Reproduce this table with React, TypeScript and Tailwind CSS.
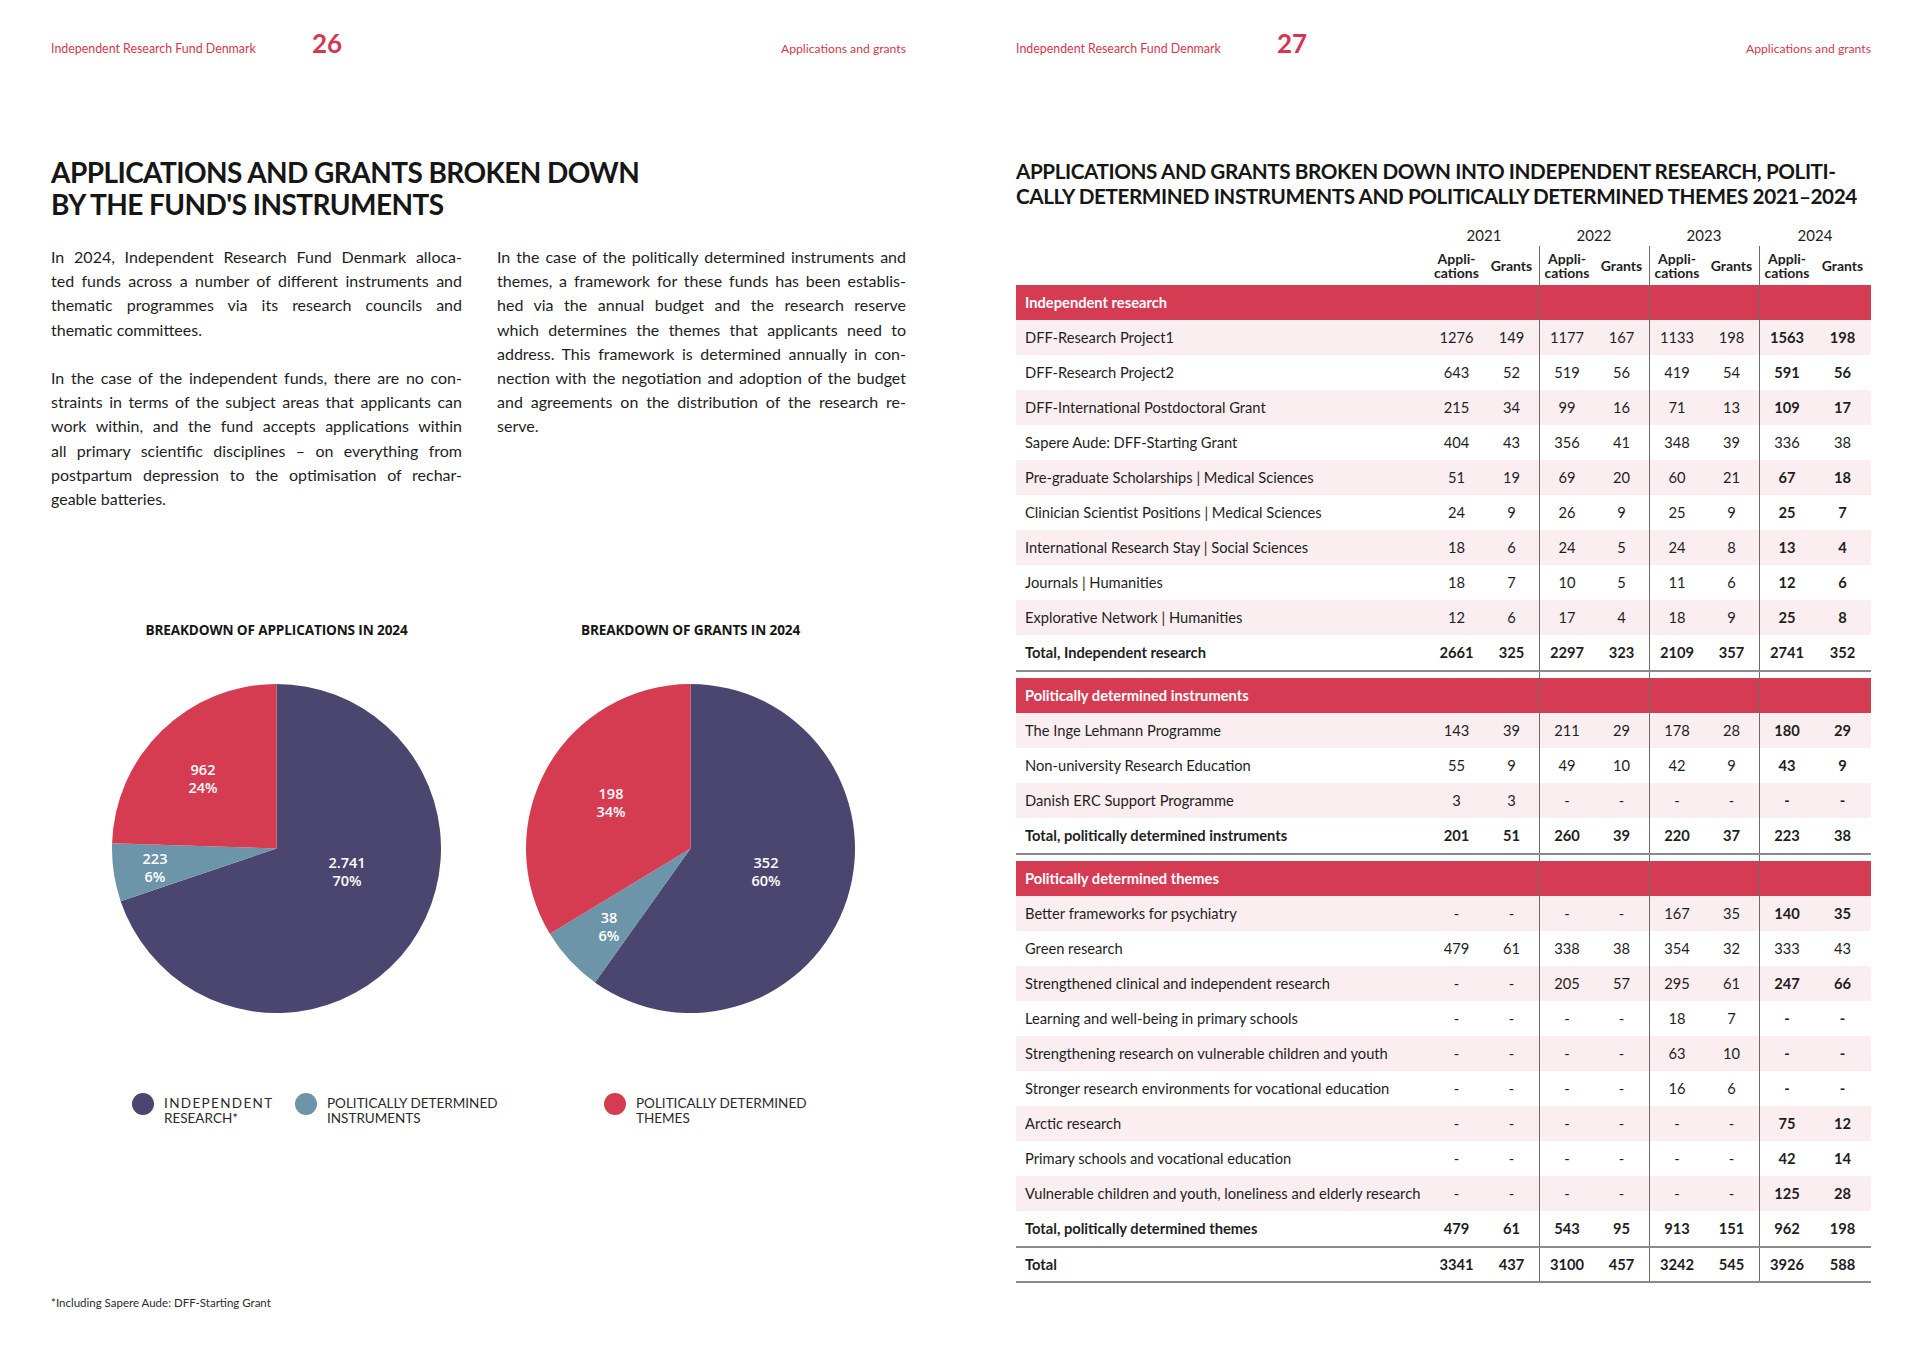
import React from "react";

type Row = { label: string; v: string[]; bold: boolean };

const sec1: Row[] = [
  { label: "DFF-Research Project1", v: ["1276", "149", "1177", "167", "1133", "198", "1563", "198"], bold: true },
  { label: "DFF-Research Project2", v: ["643", "52", "519", "56", "419", "54", "591", "56"], bold: true },
  { label: "DFF-International Postdoctoral Grant", v: ["215", "34", "99", "16", "71", "13", "109", "17"], bold: true },
  { label: "Sapere Aude: DFF-Starting Grant", v: ["404", "43", "356", "41", "348", "39", "336", "38"], bold: false },
  { label: "Pre-graduate Scholarships | Medical Sciences", v: ["51", "19", "69", "20", "60", "21", "67", "18"], bold: true },
  { label: "Clinician Scientist Positions | Medical Sciences", v: ["24", "9", "26", "9", "25", "9", "25", "7"], bold: true },
  { label: "International Research Stay | Social Sciences", v: ["18", "6", "24", "5", "24", "8", "13", "4"], bold: true },
  { label: "Journals | Humanities", v: ["18", "7", "10", "5", "11", "6", "12", "6"], bold: true },
  { label: "Explorative Network | Humanities", v: ["12", "6", "17", "4", "18", "9", "25", "8"], bold: true },
];
const tot1: Row = { label: "Total, Independent research", v: ["2661", "325", "2297", "323", "2109", "357", "2741", "352"], bold: true };

const sec2: Row[] = [
  { label: "The Inge Lehmann Programme", v: ["143", "39", "211", "29", "178", "28", "180", "29"], bold: true },
  { label: "Non-university Research Education", v: ["55", "9", "49", "10", "42", "9", "43", "9"], bold: true },
  { label: "Danish ERC Support Programme", v: ["3", "3", "-", "-", "-", "-", "-", "-"], bold: true },
];
const tot2: Row = { label: "Total, politically determined instruments", v: ["201", "51", "260", "39", "220", "37", "223", "38"], bold: true };

const sec3: Row[] = [
  { label: "Better frameworks for psychiatry", v: ["-", "-", "-", "-", "167", "35", "140", "35"], bold: true },
  { label: "Green research", v: ["479", "61", "338", "38", "354", "32", "333", "43"], bold: false },
  { label: "Strengthened clinical and independent research", v: ["-", "-", "205", "57", "295", "61", "247", "66"], bold: true },
  { label: "Learning and well-being in primary schools", v: ["-", "-", "-", "-", "18", "7", "-", "-"], bold: true },
  { label: "Strengthening research on vulnerable children and youth", v: ["-", "-", "-", "-", "63", "10", "-", "-"], bold: true },
  { label: "Stronger research environments for vocational education", v: ["-", "-", "-", "-", "16", "6", "-", "-"], bold: true },
  { label: "Arctic research", v: ["-", "-", "-", "-", "-", "-", "75", "12"], bold: true },
  { label: "Primary schools and vocational education", v: ["-", "-", "-", "-", "-", "-", "42", "14"], bold: true },
  { label: "Vulnerable children and youth, loneliness and elderly research", v: ["-", "-", "-", "-", "-", "-", "125", "28"], bold: true },
];
const tot3: Row = { label: "Total, politically determined themes", v: ["479", "61", "543", "95", "913", "151", "962", "198"], bold: true };
const grand: Row = { label: "Total", v: ["3341", "437", "3100", "457", "3242", "545", "3926", "588"], bold: true };

const GRID = "grid grid-cols-[413px_55px_55px_55px_55px_55px_55px_55px_57px]";
const LINE = "border-l border-[#6b6b6b]";

function lineCls(i: number) {
  return i === 2 || i === 4 || i === 6 ? LINE : "";
}

function DataRow({ row, pink, total, short }: { row: Row; pink: boolean; total?: boolean; short?: boolean }) {
  return (
    <div
      className={`${GRID} ${short ? "h-[33px]" : "h-[35px]"} ${
        pink ? "bg-[#fbeef0]" : "bg-white"
      } text-[14.7px] text-[#1e1e1e]`}
    >
      <div className={`flex items-center pl-[9px] whitespace-nowrap ${total ? "font-bold" : "font-normal"}`}>{row.label}</div>
      {row.v.map((x, i) => (
        <div
          key={i}
          className={`flex items-center justify-center ${lineCls(i)} ${
            total ? "font-bold" : i >= 6 && row.bold ? "font-bold" : "font-normal"
          }`}
        >
          {x}
        </div>
      ))}
    </div>
  );
}

function Band({ label }: { label: string }) {
  return (
    <div className={`${GRID} h-[35px] bg-[#d53c53] text-[14.7px] text-white font-bold`}>
      <div className="flex items-center pl-[9px] whitespace-nowrap">{label}</div>
      {[0, 1, 2, 3, 4, 5, 6, 7].map((i) => (
        <div key={i} className={lineCls(i)} />
      ))}
    </div>
  );
}

function Rule() {
  return <div className="h-[2px] bg-[#8a8a8a]" />;
}

function Gap() {
  return (
    <div className={`${GRID} h-[6px]`}>
      <div />
      {[0, 1, 2, 3, 4, 5, 6, 7].map((i) => (
        <div key={i} className={lineCls(i)} />
      ))}
    </div>
  );
}

function Section({ title, rows, total }: { title: string; rows: Row[]; total: Row }) {
  return (
    <div>
      <Band label={title} />
      {rows.map((r, i) => (
        <DataRow key={i} row={r} pink={i % 2 === 0} />
      ))}
      <DataRow row={total} pink={false} total />
      <Rule />
    </div>
  );
}

function slice(cx: number, cy: number, r: number, a0: number, a1: number) {
  const rad = (a: number) => (a * Math.PI) / 180;
  const x0 = cx + r * Math.sin(rad(a0));
  const y0 = cy - r * Math.cos(rad(a0));
  const x1 = cx + r * Math.sin(rad(a1));
  const y1 = cy - r * Math.cos(rad(a1));
  const large = a1 - a0 > 180 ? 1 : 0;
  return `M ${cx} ${cy} L ${x0} ${y0} A ${r} ${r} 0 ${large} 1 ${x1} ${y1} Z`;
}

type Lbl = { x: number; y: number; a: string; b: string };

function Pie({ parts, labels }: { parts: number[]; labels: Lbl[] }) {
  const colors = ["#4b4670", "#6d95a9", "#d53b51"];
  const sum = parts.reduce((s, p) => s + p, 0);
  let acc = 0;
  const cx = 164.5;
  const cy = 164.5;
  const r = 164.5;
  return (
    <svg width="329" height="329" viewBox="0 0 329 329" className="block">
      {parts.map((p, i) => {
        const a0 = (acc / sum) * 360;
        acc += p;
        const a1 = (acc / sum) * 360;
        return <path key={i} d={slice(cx, cy, r, a0, a1)} fill={colors[i]} />;
      })}
      {labels.map((l, i) => (
        <g key={i} fill="#ffffff" fontFamily="'Open Sans', sans-serif" fontWeight={600} fontSize="14.5" textAnchor="middle">
          <text x={l.x} y={l.y} dominantBaseline="central">
            {l.a}
          </text>
          <text x={l.x} y={l.y + 18} dominantBaseline="central">
            {l.b}
          </text>
        </g>
      ))}
    </svg>
  );
}

function JLine({ t, last }: { t: string; last?: boolean }) {
  return (
    <div className={`whitespace-nowrap ${last ? "text-left" : "text-justify [text-align-last:justify]"}`}>{t}</div>
  );
}

function Header({ num }: { num: string }) {
  return (
    <div className="flex items-baseline pt-[30px] h-[62px]">
      <div className="w-[261px] text-[12.4px] text-[#d4374f]">Independent Research Fund Denmark</div>
      <div className="text-[26px] font-bold leading-none text-[#d4374f]">{num}</div>
      <div className="ml-auto text-[12.2px] text-[#d4374f]">Applications and grants</div>
    </div>
  );
}

function Legend({ color, children }: { color: string; children: React.ReactNode }) {
  return (
    <div className="flex items-start gap-[10px]">
      <div className={`w-[22px] h-[22px] rounded-full shrink-0 ${color}`} />
      <div className="text-[13.5px] leading-[15px] text-[#2a2a2a] pt-[3px] uppercase">{children}</div>
    </div>
  );
}

export default function App() {
  return (
    <div className="w-[1920px] h-[1362px] bg-white flex font-['Lato',sans-serif] text-[#1e1e1e]">
      {/* Left page */}
      <div className="w-[960px] h-full pl-[51px] pr-[54px] flex flex-col">
        <Header num="26" />
        <h1 className="mt-[94px] text-[28px] leading-[32px] font-bold tracking-[-0.02em] text-[#161616] whitespace-nowrap">
          APPLICATIONS AND GRANTS BROKEN DOWN
          <br />
          BY THE FUND'S INSTRUMENTS
        </h1>
        <div className="mt-[25px] grid grid-cols-[411px_409px] gap-x-[35px] text-[16px] leading-[24.2px] text-[#1e1e1e]">
          <div>
            <JLine t="In 2024, Independent Research Fund Denmark alloca-" />
            <JLine t="ted funds across a number of different instruments and" />
            <JLine t="thematic programmes via its research councils and" />
            <JLine t="thematic committees." last />
            <div className="h-[24.2px]" />
            <JLine t="In the case of the independent funds, there are no con-" />
            <JLine t="straints in terms of the subject areas that applicants can" />
            <JLine t="work within, and the fund accepts applications within" />
            <JLine t="all primary scientific disciplines – on everything from" />
            <JLine t="postpartum depression to the optimisation of rechar-" />
            <JLine t="geable batteries." last />
          </div>
          <div>
            <JLine t="In the case of the politically determined instruments and" />
            <JLine t="themes, a framework for these funds has been establis-" />
            <JLine t="hed via the annual budget and the research reserve" />
            <JLine t="which determines the themes that applicants need to" />
            <JLine t="address. This framework is determined annually in con-" />
            <JLine t="nection with the negotiation and adoption of the budget" />
            <JLine t="and agreements on the distribution of the research re-" />
            <JLine t="serve." last />
          </div>
        </div>
        <div className="mt-[110px] flex">
          <div className="ml-[61px] w-[329px] flex flex-col items-center">
            <div className="h-[18px] leading-[18px] whitespace-nowrap font-['Open_Sans',sans-serif] font-bold text-[13.6px] tracking-[-0.01em] text-[#161616]">
              BREAKDOWN OF APPLICATIONS IN 2024
            </div>
            <div className="mt-[45px]">
              <Pie
                parts={[2741, 223, 962]}
                labels={[
                  { x: 91, y: 85, a: "962", b: "24%" },
                  { x: 43, y: 174, a: "223", b: "6%" },
                  { x: 235, y: 178, a: "2.741", b: "70%" },
                ]}
              />
            </div>
          </div>
          <div className="ml-[85px] w-[329px] flex flex-col items-center">
            <div className="h-[18px] leading-[18px] whitespace-nowrap font-['Open_Sans',sans-serif] font-bold text-[13.6px] tracking-[-0.01em] text-[#161616]">
              BREAKDOWN OF GRANTS IN 2024
            </div>
            <div className="mt-[45px]">
              <Pie
                parts={[352, 38, 198]}
                labels={[
                  { x: 85, y: 109, a: "198", b: "34%" },
                  { x: 83, y: 233, a: "38", b: "6%" },
                  { x: 240, y: 178, a: "352", b: "60%" },
                ]}
              />
            </div>
          </div>
        </div>
        <div className="mt-[80px] ml-[81px] flex">
          <div className="w-[163px]">
            <Legend color="bg-[#4b4670]">
              <span className="tracking-[0.1em]">Independent</span>
              <br />
              Research*
            </Legend>
          </div>
          <div className="w-[309px]">
            <Legend color="bg-[#6d95a9]">
              Politically determined
              <br />
              instruments
            </Legend>
          </div>
          <div>
            <Legend color="bg-[#d53b51]">
              Politically determined
              <br />
              themes
            </Legend>
          </div>
        </div>
        <div className="mt-auto mb-[51px] text-[11.5px] text-[#2a2a2a]">*Including Sapere Aude: DFF-Starting Grant</div>
      </div>

      {/* Right page */}
      <div className="w-[960px] h-full pl-[56px] pr-[49px] flex flex-col">
        <Header num="27" />
        <h2 className="mt-[97px] text-[20.7px] leading-[25px] font-bold tracking-[-0.02em] text-[#161616] whitespace-nowrap">
          APPLICATIONS AND GRANTS BROKEN DOWN INTO INDEPENDENT RESEARCH, POLITI-
          <br />
          CALLY DETERMINED INSTRUMENTS AND POLITICALLY DETERMINED THEMES 2021–2024
        </h2>
        <div className="mt-[15px] w-[855px]">
          <div className={`${GRID} h-[22px] text-[15px] text-[#1e1e1e]`}>
            <div />
            <div className="col-span-2 flex items-center justify-center">2021</div>
            <div className="col-span-2 flex items-center justify-center">2022</div>
            <div className="col-span-2 flex items-center justify-center">2023</div>
            <div className="col-span-2 flex items-center justify-center">2024</div>
          </div>
          <div className={`${GRID} h-[39px] text-[14px] leading-[14px] font-bold text-[#1e1e1e]`}>
            <div />
            {[0, 1, 2, 3, 4, 5, 6, 7].map((i) => (
              <div key={i} className={`flex items-center justify-center text-center ${lineCls(i)}`}>
                {i % 2 === 0 ? (
                  <span>
                    Appli-
                    <br />
                    cations
                  </span>
                ) : (
                  <span>Grants</span>
                )}
              </div>
            ))}
          </div>
          <Section title="Independent research" rows={sec1} total={tot1} />
          <Gap />
          <Section title="Politically determined instruments" rows={sec2} total={tot2} />
          <Gap />
          <Section title="Politically determined themes" rows={sec3} total={tot3} />
          <DataRow row={grand} pink={false} total short />
          <Rule />
        </div>
      </div>
    </div>
  );
}
